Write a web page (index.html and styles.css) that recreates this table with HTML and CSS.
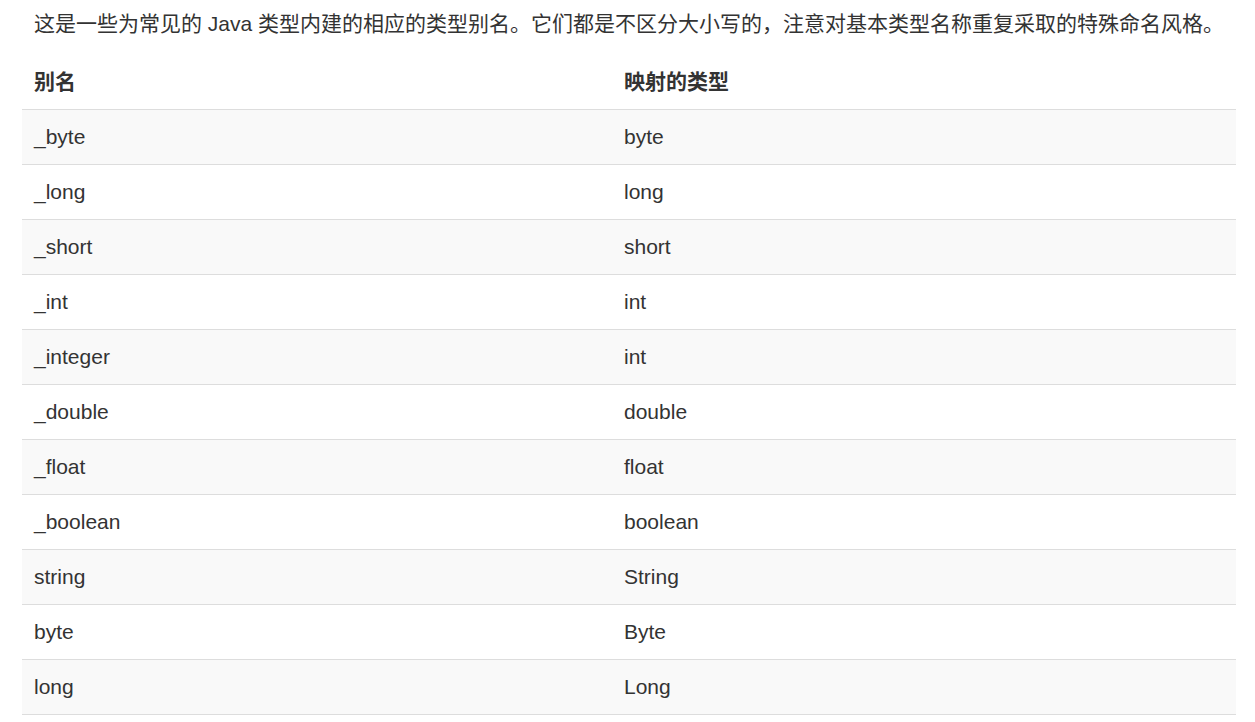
FILE: index.html
```html
<!DOCTYPE html>
<html lang="zh-CN">
<head>
<meta charset="utf-8">
<title>类型别名</title>
<link rel="stylesheet" href="styles.css">
</head>
<body>
<div class="content">
  <p class="intro">这是一些为常见的 Java 类型内建的相应的类型别名。它们都是不区分大小写的，注意对基本类型名称重复采取的特殊命名风格。</p>
  <table class="alias-table">
    <thead>
      <tr><th class="col-alias">别名</th><th>映射的类型</th></tr>
    </thead>
    <tbody>
      <tr><td>_byte</td><td>byte</td></tr>
      <tr><td>_long</td><td>long</td></tr>
      <tr><td>_short</td><td>short</td></tr>
      <tr><td>_int</td><td>int</td></tr>
      <tr><td>_integer</td><td>int</td></tr>
      <tr><td>_double</td><td>double</td></tr>
      <tr><td>_float</td><td>float</td></tr>
      <tr><td>_boolean</td><td>boolean</td></tr>
      <tr><td>string</td><td>String</td></tr>
      <tr><td>byte</td><td>Byte</td></tr>
      <tr><td>long</td><td>Long</td></tr>
    </tbody>
  </table>
</div>
</body>
</html>
```

FILE: styles.css
```css
html, body {
  margin: 0;
  padding: 0;
  background: #fff;
}
body {
  font-family: "Liberation Sans", Arial, "Noto Sans CJK SC", sans-serif;
  font-size: 21px;
  line-height: 30px;
  color: #333;
}
.content {
  padding: 9px 19px 0 22px;
}
.intro {
  margin: 0 0 15px 12px;
}
.alias-table {
  width: 1214px;
  border-collapse: collapse;
  border-spacing: 0;
}
.alias-table th,
.alias-table td {
  padding: 12px;
  text-align: left;
  vertical-align: top;
}
.alias-table th {
  font-weight: bold;
  padding-top: 13px;
  border-bottom: 1px solid #ddd;
}
.alias-table td {
  border-bottom: 1px solid #ddd;
}
.alias-table .col-alias {
  width: 566px;
}
.alias-table tbody tr:nth-child(odd) {
  background: #f9f9f9;
}
```
